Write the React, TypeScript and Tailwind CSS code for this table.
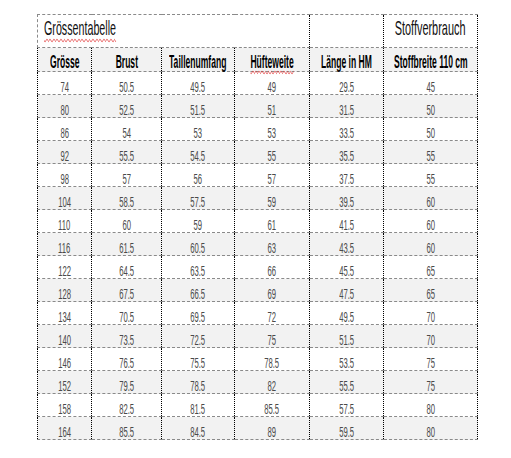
import React from 'react';

// Size chart: Grösse / Brust / Taille / Hüfte / Länge / fabric usage
const rows: string[][] = [
  ['74', '50.5', '49.5', '49', '29.5', '45'],
  ['80', '52.5', '51.5', '51', '31.5', '50'],
  ['86', '54', '53', '53', '33.5', '50'],
  ['92', '55.5', '54.5', '55', '35.5', '55'],
  ['98', '57', '56', '57', '37.5', '55'],
  ['104', '58.5', '57.5', '59', '39.5', '60'],
  ['110', '60', '59', '61', '41.5', '60'],
  ['116', '61.5', '60.5', '63', '43.5', '60'],
  ['122', '64.5', '63.5', '66', '45.5', '65'],
  ['128', '67.5', '66.5', '69', '47.5', '65'],
  ['134', '70.5', '69.5', '72', '49.5', '70'],
  ['140', '73.5', '72.5', '75', '51.5', '70'],
  ['146', '76.5', '75.5', '78.5', '53.5', '75'],
  ['152', '79.5', '78.5', '82', '55.5', '75'],
  ['158', '82.5', '81.5', '85.5', '57.5', '80'],
  ['164', '85.5', '84.5', '89', '59.5', '80'],
];

const headers = ['Grösse', 'Brust', 'Taillenumfang', 'Hüfteweite', 'Länge in HM', 'Stoffbreite 110 cm'];

const cellBorder = 'border-l border-l-black border-dotted border-b border-b-[#8a8a8a] [border-bottom-style:dashed] p-0';

export default function App() {
  return (
    <div className="min-h-screen bg-white font-['Liberation_Sans',Arial,sans-serif] pt-[14px] pl-[37px]">
      <table className="table-fixed border-collapse w-[440px]">
        <colgroup>
          <col className="w-[54px]" />
          <col className="w-[70px]" />
          <col className="w-[73px]" />
          <col className="w-[75px]" />
          <col className="w-[74px]" />
          <col className="w-[94px]" />
        </colgroup>
        <tbody>
          <tr className="h-[33px] bg-white">
            <td
              colSpan={4}
              className="border-t border-t-[#8a8a8a] [border-top-style:dashed] border-l border-l-[#8a8a8a] [border-left-style:dashed] border-b border-b-[#8a8a8a] [border-bottom-style:dashed] p-0 align-top"
            >
              <div className="pl-[6px] pt-[2px] leading-none whitespace-nowrap">
                <span className="inline-block origin-left scale-x-[0.51] text-[21px] text-[#111] underline decoration-wavy decoration-[#e03030] decoration-1 underline-offset-[3px]">
                  Grössentabelle
                </span>
              </div>
            </td>
            <td className={`${cellBorder} border-t border-t-[#8a8a8a] [border-top-style:dashed]`} />
            <td className={`${cellBorder} border-t border-t-[#8a8a8a] [border-top-style:dashed] border-r border-r-black align-top`}>
              <div className="flex justify-center pt-[2px] leading-none whitespace-nowrap">
                <span className="inline-block scale-x-[0.52] text-[21px] text-[#111]">Stoffverbrauch</span>
              </div>
            </td>
          </tr>
          <tr className="h-[24px] bg-[#f2f2f2]">
            {headers.map((h, i) => (
              <td key={h} className={`${cellBorder} align-bottom ${i === 5 ? 'border-r border-r-black' : ''}`}>
                <div className="flex justify-center leading-none whitespace-nowrap">
                  <span
                    className={`inline-block scale-x-[0.45] text-[19px] font-bold text-black ${
                      i === 3 ? 'underline decoration-wavy decoration-[#e03030] decoration-1 underline-offset-[2px]' : ''
                    }`}
                  >
                    {h}
                  </span>
                </div>
              </td>
            ))}
          </tr>
          {rows.map((r, ri) => (
            <tr key={r[0]} className={`h-[23px] ${ri % 2 === 1 ? 'bg-[#f2f2f2]' : 'bg-white'}`}>
              {r.map((v, ci) => (
                <td key={ci} className={`${cellBorder} align-bottom ${ci === 5 ? 'border-r border-r-black' : ''}`}>
                  <div className="flex justify-center leading-none whitespace-nowrap">
                    <span className="inline-block scale-x-[0.55] text-[14px] text-[#4a4a4a]">{v}</span>
                  </div>
                </td>
              ))}
            </tr>
          ))}
        </tbody>
      </table>
    </div>
  );
}
